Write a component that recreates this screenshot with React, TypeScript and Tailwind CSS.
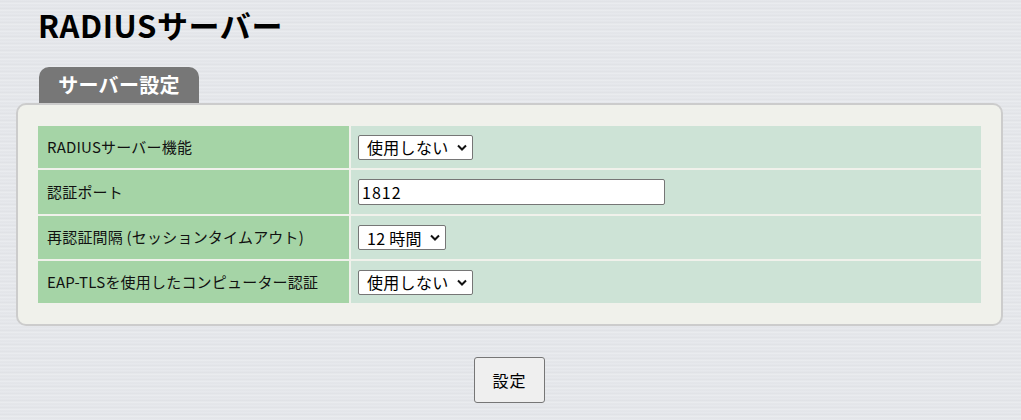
import React from "react";

const font = "font-['Noto_Sans_CJK_JP','Liberation_Sans',sans-serif]";

function Chevron() {
  return (
    <svg width="10" height="7" viewBox="0 0 10 7" className="shrink-0">
      <path d="M1 1.5 L5 5.5 L9 1.5" fill="none" stroke="#111" strokeWidth="2" />
    </svg>
  );
}

function Select({ value, width }: { value: string; width: string }) {
  return (
    <div className={`flex h-[25px] items-center justify-between whitespace-nowrap rounded-[2px] border border-[#767676] bg-white pl-[8px] pr-[5px] text-[16px] tracking-[0.3px] text-black ${width}`}>
      <span className="leading-none">{value}</span>
      <Chevron />
    </div>
  );
}

const rows: { label: string; h: string; control: React.ReactNode }[] = [
  { label: "RADIUSサーバー機能", h: "h-[42px]", control: <Select value="使用しない" width="w-[115px]" /> },
  {
    label: "認証ポート",
    h: "h-[44px]",
    control: (
      <input
        defaultValue="1812"
        className="h-[26px] w-[307px] rounded-[2px] border border-[#767676] bg-white px-[3px] text-[16px] tracking-[1px] text-black outline-none"
      />
    ),
  },
  { label: "再認証間隔 (セッションタイムアウト)", h: "h-[43px]", control: <Select value="12 時間" width="w-[88px]" /> },
  { label: "EAP-TLSを使用したコンピューター認証", h: "h-[42px]", control: <Select value="使用しない" width="w-[115px]" /> },
];

export default function App() {
  return (
    <div
      className={`${font} min-h-[420px] w-full bg-[repeating-linear-gradient(180deg,#e6e8ec_0px,#dfe1e5_2px,#eceef1_3px,#e2e4e8_5px,#e8eaee_7px)] text-black`}
    >
      <div className="w-[1019px] px-[16px] pt-[5px] pb-[16px]">
        <h1 className="ml-[22px] text-[31px] font-bold leading-[40px] tracking-[0.6px]">RADIUSサーバー</h1>
        <div className="mt-[22px] ml-[23px] flex h-[36px] w-[160px] items-center justify-center rounded-t-[10px] bg-[#777777] text-[20px] font-bold tracking-[0.3px] text-white">
          サーバー設定
        </div>
        <div className="w-[987px] rounded-[10px] border-2 border-[#cccccc] bg-[#f0f1eb] px-[20px] py-[21px]">
          <div className="flex flex-col gap-[2px]">
            {rows.map((r) => (
              <div key={r.label} className={`flex gap-[2px] ${r.h}`}>
                <div className="flex w-[311px] items-center whitespace-nowrap bg-[#a5d4a6] pl-[9px] text-[15px] tracking-[0.2px] text-[#111]">
                  {r.label}
                </div>
                <div className="flex flex-1 items-center bg-[#cde3d6] pl-[7px]">{r.control}</div>
              </div>
            ))}
          </div>
        </div>
        <div className="mt-[31px] flex justify-center">
          <button className="h-[46px] w-[71px] rounded-[3px] border border-[#767676] bg-[#efefef] text-[16px] tracking-[1px] text-black">
            設定
          </button>
        </div>
      </div>
    </div>
  );
}
